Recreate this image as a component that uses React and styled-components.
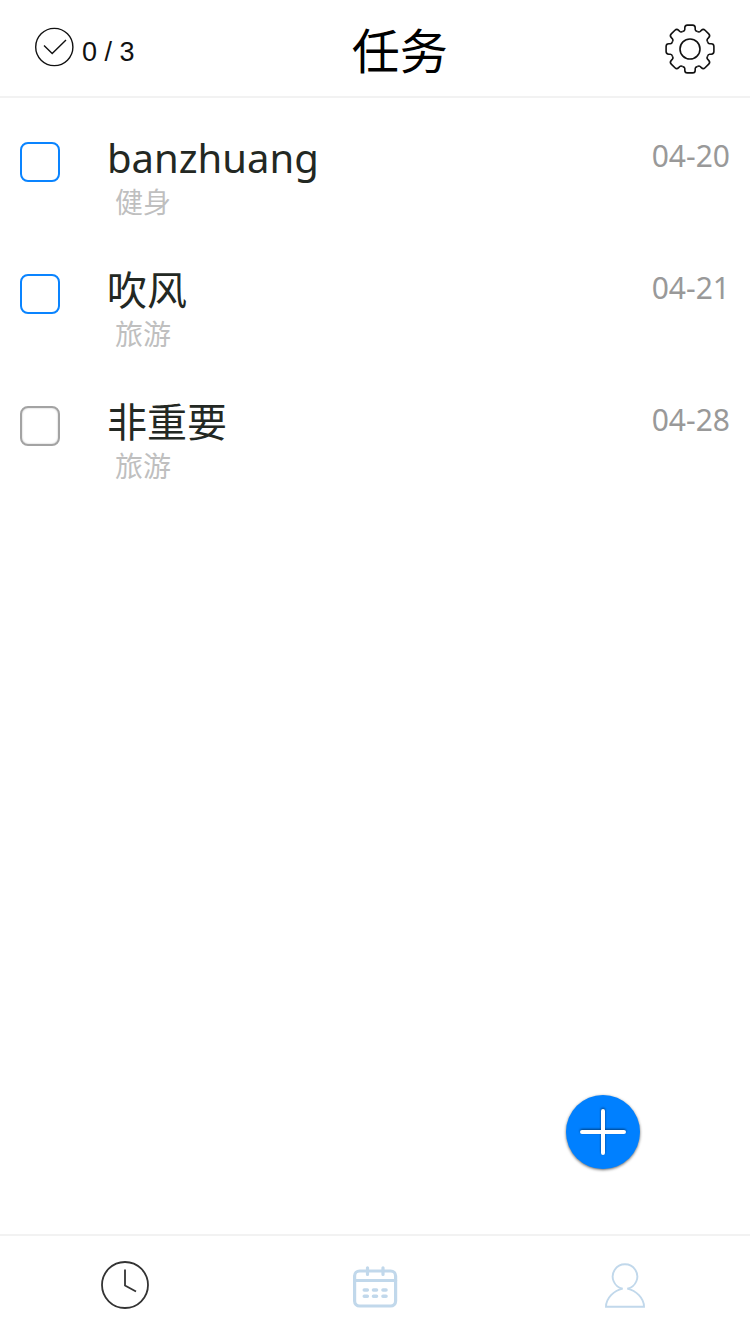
import React from "react";
import styled, { createGlobalStyle } from "styled-components";

const GlobalStyle = createGlobalStyle`
  *, *::before, *::after { box-sizing: border-box; }
  body {
    margin: 0;
    background: #fff;
    font-family: "Noto Sans", "Noto Sans CJK SC", sans-serif;
  }
  svg { display: block; }
`;

const Page = styled.div`
  display: flex;
  flex-direction: column;
  min-height: 100vh;
`;

const Header = styled.header`
  display: flex;
  align-items: center;
  justify-content: space-between;
  height: 98px;
  padding: 0 35px;
  border-bottom: 2px solid #f2f2f2;
`;

const Progress = styled.div`
  display: flex;
  align-items: center;
  gap: 8px;
  font-family: "Liberation Sans", sans-serif;
  font-size: 27px;
  line-height: 32px;
  color: #111;

  svg { margin-bottom: 2px; }
  span { padding-top: 8px; }
`;

const Title = styled.h1`
  margin: 0;
  font-family: "Noto Sans CJK SC", sans-serif;
  font-size: 48px;
  font-weight: 400;
  line-height: 64px;
  color: #000;
`;

const IconButton = styled.button`
  padding: 2px 0 0;
  border: 0;
  background: none;
  color: #111;
  cursor: pointer;
`;

const TaskList = styled.ul`
  flex: 1;
  margin: 0;
  padding: 24px 0 0;
  list-style: none;
`;

const Task = styled.li`
  display: flex;
  align-items: flex-start;
  height: 132px;
  padding: 0 20px;
`;

const Check = styled.input`
  appearance: none;
  flex: none;
  width: 40px;
  height: 40px;
  margin: 20px 47px 0 0;
  border: 2px solid ${(p) => (p.$important ? "#0a84ff" : "#a3a3a3")};
  border-radius: 8px;
  background: #fff;
  box-shadow: ${(p) => (p.$important ? "none" : "inset 0 0 2px #bbb")};

  &:checked { background: #0a84ff; }
`;

const TaskText = styled.div`
  flex: 1;
`;

const TaskName = styled.label`
  display: block;
  padding-top: 8px;
  font-size: 40px;
  line-height: 56px;
  color: #232823;
`;

const TaskGroup = styled.div`
  padding-left: 8px;
  font-size: 28px;
  line-height: 32px;
  color: #bfbfbf;
`;

const TaskDate = styled.time`
  padding-top: 14px;
  font-size: 30px;
  line-height: 40px;
  color: #999;
`;

const AddButton = styled.button`
  position: fixed;
  right: 110px;
  bottom: 165px;
  display: grid;
  place-items: center;
  width: 74px;
  height: 74px;
  padding: 0;
  border: 0;
  border-radius: 50%;
  background: #0080ff;
  box-shadow: 0 1px 3px rgba(0, 0, 0, 0.6);
  cursor: pointer;

  svg { filter: drop-shadow(0 -1px 1px rgba(0, 0, 0, 0.5)); }
`;

const TabBar = styled.nav`
  display: grid;
  grid-template-columns: repeat(3, 1fr);
  height: 100px;
  border-top: 2px solid #f2f2f2;
`;

const Tab = styled.a`
  display: grid;
  place-items: center;
  color: ${(p) => (p.$active ? "#333" : "#c1d8eb")};
`;

const CheckCircleIcon = () => (
  <svg width="39" height="40" viewBox="0 0 39 40" fill="none" stroke="currentColor" strokeWidth="1.4" aria-hidden="true">
    <circle cx="19.3" cy="20" r="18.6" />
    <path d="M9 18.5 L17.2 26.5 L31 13" />
  </svg>
);

const GEAR_ANGLES = [0, 45, 90, 135, 180, 225, 270, 315];

const GearIcon = () => (
  <svg width="50" height="50" viewBox="-25 -25 50 50" fill="none" stroke="currentColor" strokeWidth="1.6" aria-hidden="true">
    <circle r="10" />
    {GEAR_ANGLES.map((angle) => (
      <path
        key={angle}
        transform={`rotate(${angle})`}
        d="M-7.3 -17.6 Q-5.2 -18 -5.2 -19.6 V-21.2 Q-5.2 -23.9 -2.6 -23.9 H2.6 Q5.2 -23.9 5.2 -21.2 V-19.6 Q5.2 -18 7.3 -17.6"
      />
    ))}
  </svg>
);

const PlusIcon = () => (
  <svg width="46" height="46" viewBox="0 0 46 46" stroke="#fff" strokeWidth="4" strokeLinecap="round" aria-hidden="true">
    <path d="M23 2 V44 M2 23 H44" />
  </svg>
);

const ClockIcon = () => (
  <svg width="48" height="48" viewBox="0 0 48 48" fill="none" stroke="currentColor" strokeWidth="1.8" aria-hidden="true">
    <circle cx="24" cy="24" r="23" />
    <path d="M24 8.5 V24.5 L35 30.5" />
  </svg>
);

const CalendarIcon = () => (
  <svg width="46" height="46" viewBox="0 -4 46 46" fill="none" stroke="currentColor" strokeWidth="3.2" strokeLinecap="round" aria-hidden="true">
    <rect x="2.6" y="5" width="41" height="35" rx="5" />
    <path d="M3 14.5 H43.5" />
    <path d="M15.5 1.8 V8.5 M31 1.8 V8.5" />
    <path d="M12.3 24 H15.3 M21.5 24 H24.5 M31 24 H34 M12.3 30.2 H15.3 M21.5 30.2 H24.5 M31 30.2 H34" strokeWidth="3.6" />
  </svg>
);

const PersonIcon = () => (
  <svg width="40" height="48" viewBox="0 -2 40 48" fill="none" stroke="currentColor" strokeWidth="1.9" aria-hidden="true">
    <path d="M17.6 25.6 A12.3 12.3 0 1 1 22.4 25.6" />
    <path d="M17.6 25.6 C9 27.5 1 35 1 43.8 H39 C39 35 31 27.5 22.4 25.6" />
  </svg>
);

const tasks = [
  { id: "t1", name: "banzhuang", group: "健身", date: "04-20", important: true },
  { id: "t2", name: "吹风", group: "旅游", date: "04-21", important: true },
  { id: "t3", name: "非重要", group: "旅游", date: "04-28", important: false },
];

export default function App() {
  return (
    <Page lang="zh-CN">
      <GlobalStyle />
      <Header>
        <Progress>
          <CheckCircleIcon />
          <span>0 / 3</span>
        </Progress>
        <Title>任务</Title>
        <IconButton type="button" aria-label="设置">
          <GearIcon />
        </IconButton>
      </Header>
      <TaskList>
        {tasks.map((task) => (
          <Task key={task.id}>
            <Check type="checkbox" id={task.id} $important={task.important} />
            <TaskText>
              <TaskName htmlFor={task.id}>{task.name}</TaskName>
              <TaskGroup>{task.group}</TaskGroup>
            </TaskText>
            <TaskDate>{task.date}</TaskDate>
          </Task>
        ))}
      </TaskList>
      <AddButton type="button" aria-label="添加任务">
        <PlusIcon />
      </AddButton>
      <TabBar>
        <Tab href="#tasks" aria-label="任务" $active>
          <ClockIcon />
        </Tab>
        <Tab href="#calendar" aria-label="日历">
          <CalendarIcon />
        </Tab>
        <Tab href="#me" aria-label="我的">
          <PersonIcon />
        </Tab>
      </TabBar>
    </Page>
  );
}
